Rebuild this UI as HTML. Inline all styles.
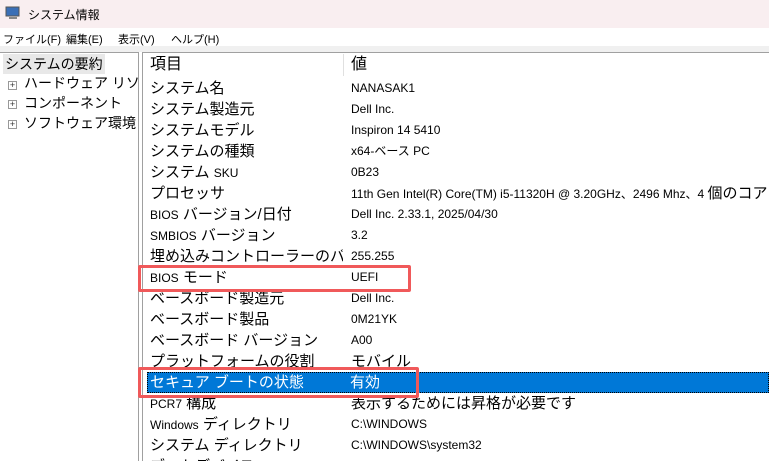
<!DOCTYPE html>
<html><head><meta charset="utf-8"><style>
*{margin:0;padding:0;box-sizing:border-box}
html,body{width:769px;height:461px;overflow:hidden}
body{background:#fff;font-family:"Liberation Sans","Noto Sans CJK JP",sans-serif;color:#000;position:relative}
.title{position:absolute;left:0;top:0;width:769px;height:28px;background:#f9eef0;font-size:12px}
.title span{position:absolute;left:28px;top:6px}
.menu{position:absolute;left:0;top:28px;width:769px;height:24px;background:#fff;font-size:11px}
.menu span{position:absolute;top:3px;white-space:nowrap}
.strip{position:absolute;left:0;top:46px;width:769px;height:6px;background:#f0f0f0}
.left{position:absolute;left:0;top:52px;width:139px;height:409px;border-right:1px solid #a0a0a0;border-top:1px solid #a0a0a0;overflow:hidden;font-size:14px}
.right{position:absolute;left:142px;top:52px;width:627px;height:409px;border-left:1px solid #a0a0a0;border-top:1px solid #a0a0a0}
.lt{position:absolute;white-space:nowrap}
.pl{position:absolute;width:9px;height:9px;border:1px solid #999;font-size:9px;line-height:7px;text-align:center;color:#333;background:#fff}
.row{position:absolute;left:143px;width:626px;height:21px;white-space:nowrap;overflow:hidden}
.k{position:absolute;left:7px;top:0;font-size:15px;line-height:21px;max-width:193px;overflow:hidden}
.v{position:absolute;left:208px;top:0;font-size:12px;line-height:21px}
.vj{font-size:15px}
.sel{background:#0078d7;color:#fff;border:1px dotted #000}
.box{position:absolute;border:3px solid #f0595a;border-radius:2px}
</style></head><body>
<div class="title">
<svg style="position:absolute;left:5px;top:6px" width="16" height="14"><rect x="1" y="1" width="13" height="9" fill="#3b6fb6" stroke="#555"/><rect x="4" y="11" width="8" height="2" fill="#888"/></svg>
<span>システム情報</span></div>
<div class="menu"><span style="left:3px">ファイル(F)</span><span style="left:66px">編集(E)</span><span style="left:118px">表示(V)</span><span style="left:171px">ヘルプ(H)</span></div>
<div class="strip"></div>
<div class="left">
<div class="lt" style="left:3px;top:1px;background:#e8e8e8;padding:0 2px">システムの要約</div>
<div class="pl" style="left:8px;top:28px">+</div><div class="lt" style="left:24px;top:20px">ハードウェア リソース</div>
<div class="pl" style="left:8px;top:47px">+</div><div class="lt" style="left:24px;top:40px">コンポーネント</div>
<div class="pl" style="left:8px;top:67px">+</div><div class="lt" style="left:24px;top:60px">ソフトウェア環境</div>
</div>
<div class="right"></div>
<div style="position:absolute;left:343px;top:54px;width:1px;height:22px;background:#e0e0e0"></div>
<div class="row" style="top:54px;height:22px"><span class="k" style="line-height:22px;font-size:16px">項目</span><span class="v vj" style="line-height:22px;font-size:16px">値</span></div>
<div class="row" style="top:78px"><span class="k">システム名</span><span class="v">NANASAK1</span></div>
<div class="row" style="top:99px"><span class="k">システム製造元</span><span class="v">Dell Inc.</span></div>
<div class="row" style="top:120px"><span class="k">システムモデル</span><span class="v">Inspiron 14 5410</span></div>
<div class="row" style="top:141px"><span class="k">システムの種類</span><span class="v">x64-ベース PC</span></div>
<div class="row" style="top:162px"><span class="k">システム <span style="font-size:12px">SKU</span></span><span class="v">0B23</span></div>
<div class="row" style="top:183px"><span class="k">プロセッサ</span><span class="v">11th Gen Intel(R) Core(TM) i5-11320H @ 3.20GHz、2496 Mhz、4 <span style="font-size:15px">個のコア</span></span></div>
<div class="row" style="top:204px"><span class="k"><span style="font-size:12px">BIOS</span> バージョン/日付</span><span class="v">Dell Inc. 2.33.1, 2025/04/30</span></div>
<div class="row" style="top:225px"><span class="k"><span style="font-size:12px">SMBIOS</span> バージョン</span><span class="v">3.2</span></div>
<div class="row" style="top:246px"><span class="k">埋め込みコントローラーのバ...</span><span class="v">255.255</span></div>
<div class="row" style="top:267px"><span class="k"><span style="font-size:12px">BIOS</span> モード</span><span class="v">UEFI</span></div>
<div class="row" style="top:288px"><span class="k">ベースボード製造元</span><span class="v">Dell Inc.</span></div>
<div class="row" style="top:309px"><span class="k">ベースボード製品</span><span class="v">0M21YK</span></div>
<div class="row" style="top:330px"><span class="k">ベースボード バージョン</span><span class="v">A00</span></div>
<div class="row" style="top:351px"><span class="k">プラットフォームの役割</span><span class="v vj">モバイル</span></div>
<div class="row sel" style="top:372px;left:147px;width:622px"><span class="k" style="left:2px;line-height:19px">セキュア ブートの状態</span><span class="v vj" style="left:202px;line-height:19px">有効</span></div>
<div class="row" style="top:393px"><span class="k"><span style="font-size:12px">PCR7</span> 構成</span><span class="v vj">表示するためには昇格が必要です</span></div>
<div class="row" style="top:414px"><span class="k"><span style="font-size:12px">Windows</span> ディレクトリ</span><span class="v">C:\WINDOWS</span></div>
<div class="row" style="top:435px"><span class="k">システム ディレクトリ</span><span class="v">C:\WINDOWS\system32</span></div>
<div class="row" style="top:456px;height:5px"><span class="k">ブートデバイス</span></div>
<div class="box" style="left:138px;top:265px;width:273px;height:27px"></div>
<div class="box" style="left:138px;top:367px;width:281px;height:31px"></div>
</body></html>
